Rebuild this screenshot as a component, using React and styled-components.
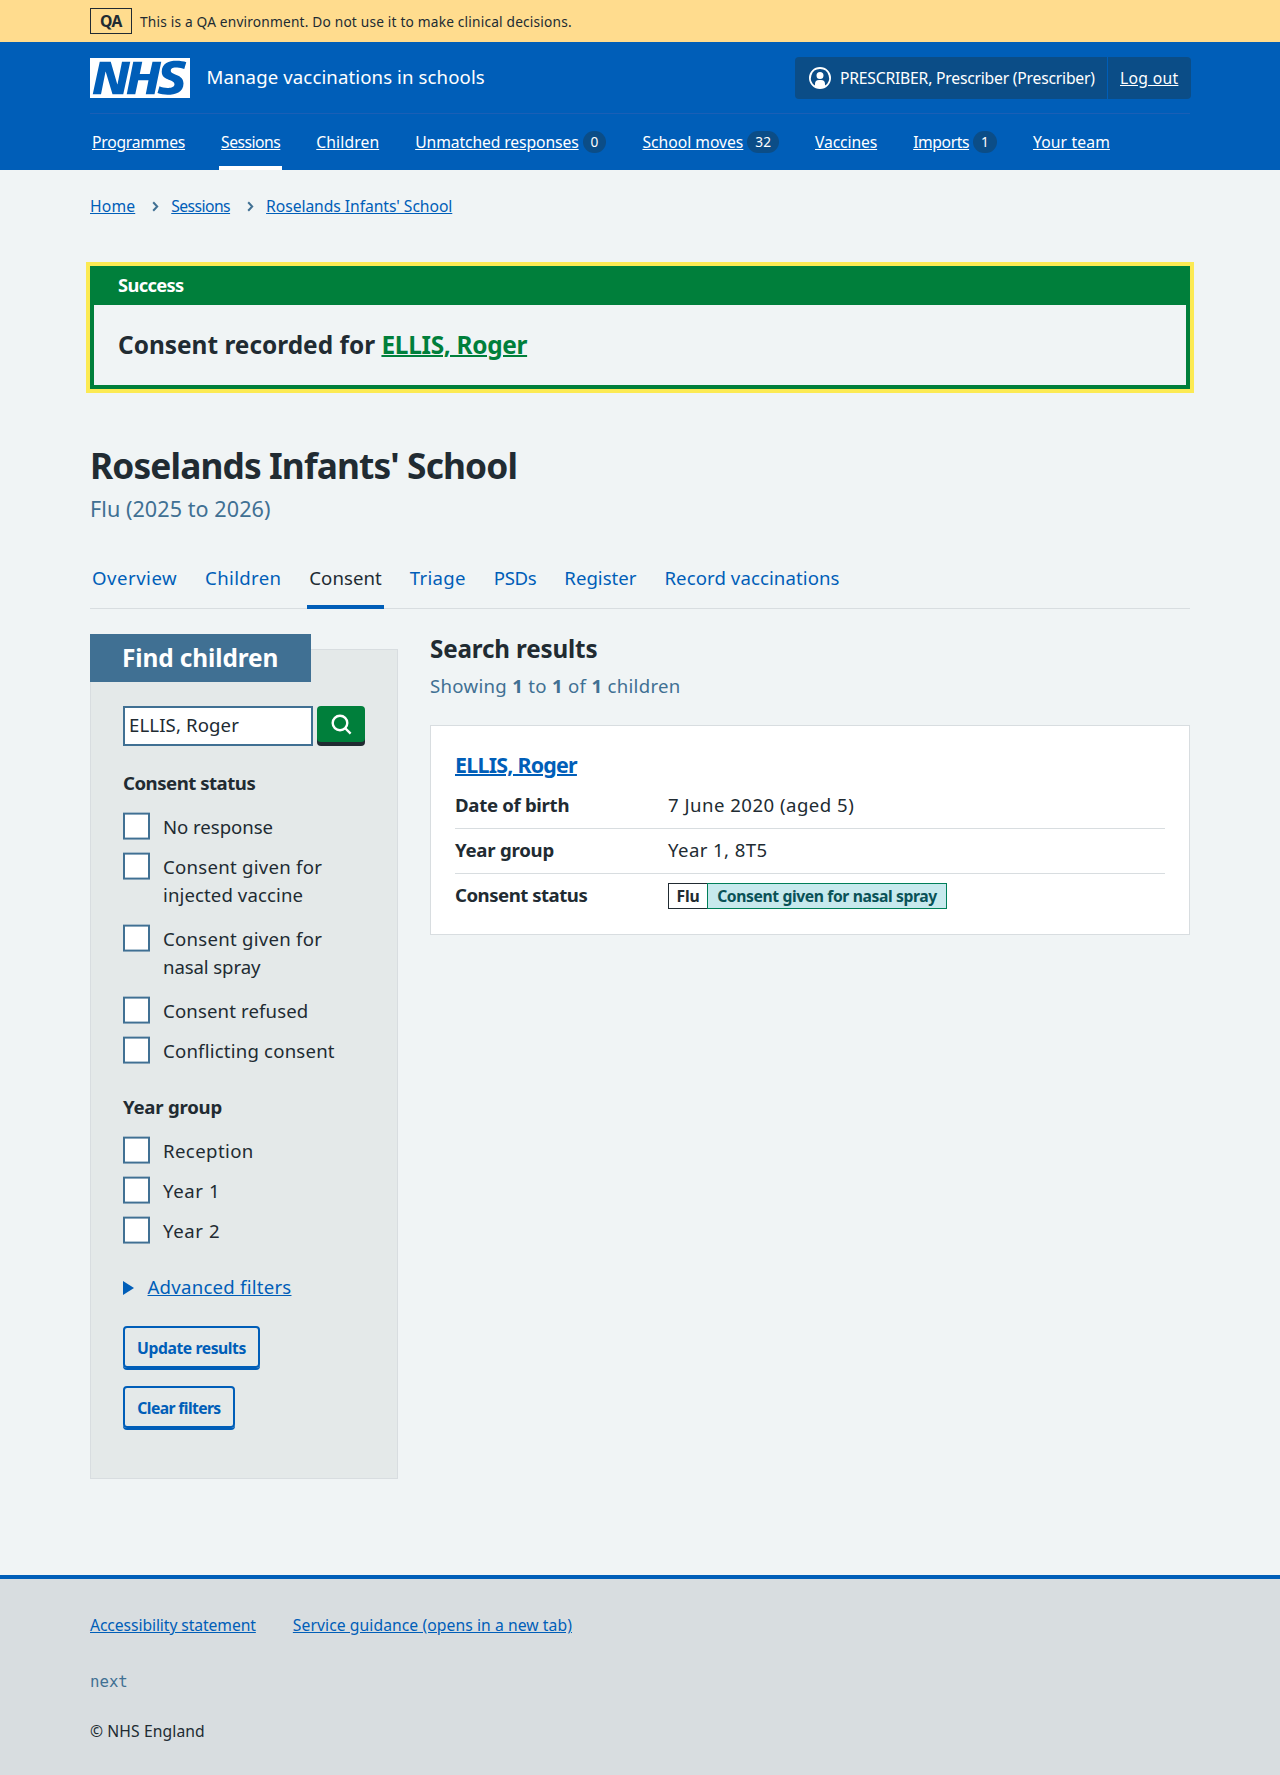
import React from "react";
import styled, { createGlobalStyle, css } from "styled-components";

const c = {
  blue: "#005eb8",
  darkBlue: "#0b4d87",
  green: "#007f3b",
  text: "#212b32",
  muted: "#407093",
  border: "#d8dde0",
  page: "#f0f4f5",
};

const Global = createGlobalStyle`
  *, *::before, *::after { box-sizing: border-box; }
  body {
    margin: 0;
    background: ${c.page};
    color: ${c.text};
    font-family: "Noto Sans", "Open Sans", sans-serif;
    font-size: 18.6px;
    line-height: 28px;
  }
  h1, h2, h3, p, ul, ol, dl, dd, fieldset { margin: 0; padding: 0; border: 0; }
  ul, ol { list-style: none; }
`;

const tracked = css`
  letter-spacing: ${(p) => p.$ls || 0}px;
`;

const Container = styled.div`
  width: 1100px;
  margin: 0 auto;
`;

/* Environment banner */
const Banner = styled.div`
  background: #ffdc8e;
`;
const BannerInner = styled(Container)`
  display: flex;
  align-items: center;
  height: 42px;
  gap: 8px;
`;
const EnvTag = styled.strong`
  display: flex;
  align-items: center;
  justify-content: center;
  width: 42px;
  height: 26px;
  border: 1px solid ${c.text};
  font-size: 15.7px;
  font-weight: 700;
  line-height: 24px;
  letter-spacing: -0.4px;
`;
const EnvText = styled.span`
  font-size: 13.72px;
  line-height: 24px;
  padding-top: 1px;
  letter-spacing: 0.18px;
`;

/* Header */
const Header = styled.header`
  background: ${c.blue};
  color: #fff;
`;
const HeaderTop = styled.div`
  display: flex;
  align-items: center;
  justify-content: space-between;
  height: 72px;
  padding: 15px 0 14px;
  border-bottom: 1px solid #1a5fb6;
`;
const Brand = styled.div`
  display: flex;
  align-items: center;
  gap: 16px;
`;
const Logo = styled.svg`
  display: block;
  width: 100px;
  height: 40px;
`;
const ServiceName = styled.span`
  padding: 0 0 2px 0.5px;
  letter-spacing: 0.11px;
`;
const Account = styled.div`
  display: flex;
  height: 42px;
  width: 396px;
  margin-right: -1px;
  border-radius: 4px;
  background: ${c.darkBlue};
  font-size: 15.7px;
  line-height: 24px;
`;
const AccountUser = styled.div`
  display: flex;
  align-items: center;
  width: 313px;
  padding-left: 13px;
  border-right: 1px solid ${c.blue};
  white-space: nowrap;
  letter-spacing: -0.21px;
`;
const UserIcon = styled.svg`
  width: 24px;
  height: 24px;
  margin-right: 8px;
  flex: none;
  fill: #fff;
`;
const LogOut = styled.a`
  display: flex;
  align-items: center;
  padding-left: 12px;
  text-decoration: underline;
  letter-spacing: 0.3px;
`;
const Nav = styled.ul`
  display: flex;
  gap: 32px;
  height: 56px;
`;
const NavItem = styled.li`
  display: flex;
  align-items: center;
  gap: 4px;
  padding: 0 2px;
  font-size: 15.7px;
  line-height: 24px;
  white-space: nowrap;
  box-shadow: ${(p) => (p.$active ? "inset 0 -4px #fff" : "none")};
`;
const NavLink = styled.a`
  text-decoration: underline;
  ${tracked}
`;
const Count = styled.span`
  height: 22px;
  padding: 0 8px;
  border-radius: 12px;
  background: ${c.darkBlue};
  font-size: 13.7px;
  line-height: 22px;
`;

/* Breadcrumb */
const Crumbs = styled.ol`
  display: flex;
  padding-top: 24px;
  font-size: 15.7px;
  line-height: 24px;
`;
const Crumb = styled.li`
  display: flex;
  align-items: center;
`;
const Chevron = styled.svg`
  width: 7px;
  height: 11px;
  margin: 1px 12px 0 17px;
  fill: none;
  stroke: ${c.muted};
  stroke-width: 2;
`;
const Link = styled.a`
  color: ${c.blue};
  text-decoration: underline;
  ${tracked}
`;

/* Notification */
const Notification = styled.section`
  margin-top: 48px;
  border: 4px solid ${c.green};
  box-shadow: 0 0 0 4px #fcea53;
`;
const NotificationTitle = styled.h2`
  padding: 1px 24px 6px;
  background: ${c.green};
  color: #fff;
  font-size: 18.3px;
  font-weight: 700;
  line-height: 28px;
  letter-spacing: -0.65px;
`;
const NotificationText = styled.h3`
  padding: 24px;
  font-size: 24.4px;
  font-weight: 700;
  line-height: 32px;
  letter-spacing: 0.01px;
`;
const GreenLink = styled.a`
  color: ${c.green};
  text-decoration: underline;
  text-decoration-thickness: 2px;
  letter-spacing: -0.3px;
`;

/* Page heading and tabs */
const Title = styled.h1`
  margin-top: 52px;
  font-size: 35.3px;
  font-weight: 700;
  line-height: 48px;
  letter-spacing: -0.88px;
`;
const Caption = styled.p`
  margin-top: 4px;
  color: ${c.muted};
  font-size: 21.6px;
  line-height: 32px;
  letter-spacing: 0.05px;
`;
const Tabs = styled.ul`
  display: flex;
  gap: 24px;
  height: 60px;
  margin-top: 24px;
  box-shadow: inset 0 -1px ${c.border};
`;
const Tab = styled.li`
  display: flex;
  align-items: center;
  padding: 1px 2px 0;
  border-bottom: 4px solid ${(p) => (p.$active ? c.blue : "transparent")};
  color: ${(p) => (p.$active ? c.text : c.blue)};
  white-space: nowrap;
  ${tracked}
`;

/* Columns */
const Columns = styled.main`
  display: grid;
  grid-template-columns: 308px 760px;
  column-gap: 32px;
  align-items: start;
`;
const Panel = styled.form`
  margin-top: 40px;
  padding: 0 32px 50px;
  border: 1px solid ${c.border};
  background: #e4e9e9;
`;
const PanelTitle = styled.h2`
  width: 221px;
  margin: -16px 0 24px -33px;
  padding: 0 32px;
  background: ${c.muted};
  color: #fff;
  font-size: 24.4px;
  font-weight: 700;
  line-height: 48px;
  white-space: nowrap;
  letter-spacing: -0.1px;
`;
const SearchRow = styled.div`
  display: flex;
  gap: 4px;
`;
const SearchInput = styled.input`
  width: 190px;
  height: 40px;
  padding: 0 4px 3px;
  border: 2px solid ${c.muted};
  border-radius: 0;
  background: #fff;
  color: ${c.text};
  font: inherit;
  letter-spacing: 0.12px;
`;
const SearchButton = styled.button`
  display: flex;
  align-items: center;
  justify-content: center;
  width: 48px;
  height: 36px;
  padding: 0 0 0 1px;
  border: 0;
  border-radius: 4px;
  background: ${c.green};
  box-shadow: 0 4px 0 ${c.text};
`;
const SearchIcon = styled.svg`
  width: 21px;
  height: 21px;
  fill: none;
  stroke: #fff;
  stroke-width: 2.4;
`;
const Group = styled.fieldset`
  margin-top: ${(p) => p.$top}px;
`;
const Legend = styled.h3`
  margin-bottom: 16px;
  font-size: 18.6px;
  font-weight: 700;
  line-height: 28px;
  ${tracked}
`;
const Option = styled.label`
  display: flex;
  gap: 13px;
  margin-bottom: ${(p) => (p.$wraps ? 16 : 12)}px;
  &:last-child { margin-bottom: 0; }
`;
const OptionLine = styled.span`
  display: block;
  ${tracked}
`;
const Box = styled.input.attrs({ type: "checkbox" })`
  appearance: none;
  flex: none;
  width: 27px;
  height: 27px;
  margin: 0;
  border: 2px solid ${c.muted};
  background: #fff;
  transform: translateY(-0.4px);
`;
const Details = styled.div`
  display: flex;
  align-items: center;
  gap: 13.5px;
  margin: 28px 0 25px;
`;
const Triangle = styled.span`
  margin-top: 2px;
  border-style: solid;
  border-color: transparent transparent transparent ${c.blue};
  border-width: 7px 0 7px 11px;
`;
const Button = styled.button`
  display: block;
  width: ${(p) => p.$width}px;
  height: 42px;
  padding: 1px 0 0;
  border: 2px solid ${c.blue};
  border-radius: 4px;
  background: transparent;
  box-shadow: 0 2px 0 ${c.blue};
  color: ${c.blue};
  font: 700 15.7px/24px "Noto Sans", sans-serif;
  white-space: nowrap;
  ${tracked}
  & + & { margin-top: 18px; }
`;

/* Results */
const Results = styled.section`
  padding-top: 24px;
`;
const ResultsTitle = styled.h2`
  font-size: 24.2px;
  font-weight: 700;
  line-height: 32px;
  letter-spacing: -0.15px;
`;
const ResultsCount = styled.p`
  margin-top: 7px;
  color: ${c.muted};
  letter-spacing: 0.3px;
  b { font-weight: 700; }
`;
const Card = styled.article`
  margin-top: 25px;
  padding: 23px 24px 25px;
  border: 1px solid ${c.border};
  background: #fff;
`;
const CardTitle = styled.h3`
  margin-bottom: 3px;
  font-size: 21.4px;
  font-weight: 700;
  line-height: 32px;
  a { text-decoration-thickness: 2px; }
`;
const SummaryRow = styled.div`
  display: grid;
  grid-template-columns: 213px 1fr;
  padding: 7px 0 9px;
  border-bottom: 1px solid ${c.border};
  &:last-child { padding-bottom: 0; border-bottom: 0; }
`;
const Key = styled.dt`
  font-weight: 700;
  ${tracked}
`;
const Value = styled.dd`
  display: flex;
  height: 28px;
  ${tracked}
`;
const Tag = styled.strong`
  display: flex;
  align-items: center;
  justify-content: center;
  width: ${(p) => p.$width}px;
  height: 26px;
  margin: 2px -1px 0 0;
  border: 1px solid ${(p) => (p.$given ? "#007f59" : c.text)};
  background: ${(p) => (p.$given ? "#c7e9ed" : "#fff")};
  color: ${(p) => (p.$given ? "#0a5257" : c.text)};
  font-size: 15.7px;
  font-weight: 700;
  line-height: 24px;
  white-space: nowrap;
  ${tracked}
`;

/* Footer */
const Footer = styled.footer`
  margin-top: 96px;
  padding: 34px 0 32px;
  border-top: 4px solid ${c.blue};
  background: ${c.border};
  font-size: 15.7px;
  line-height: 24px;
`;
const FooterLinks = styled.div`
  display: flex;
  gap: 37px;
`;
const Version = styled.p`
  margin-top: 33px;
  color: ${c.muted};
  font-family: "DejaVu Sans Mono", monospace;
  font-size: 15.7px;
`;
const Copyright = styled.p`
  margin-top: 25px;
  letter-spacing: 0.09px;
`;

const navItems = [
  { label: "Programmes", ls: -0.24 },
  { label: "Sessions", ls: -0.5, active: true },
  { label: "Children", ls: 0.1 },
  { label: "Unmatched responses", ls: -0.1, count: 0 },
  { label: "School moves", ls: -0.02, count: 32 },
  { label: "Vaccines", ls: -0.12 },
  { label: "Imports", ls: -0.4, count: 1 },
  { label: "Your team", ls: 0.13 },
];

const tabs = [
  { label: "Overview", ls: 0.5 },
  { label: "Children", ls: 0.33 },
  { label: "Consent", ls: 0.05, active: true },
  { label: "Triage", ls: 0.3 },
  { label: "PSDs", ls: -0.35 },
  { label: "Register", ls: 0 },
  { label: "Record vaccinations", ls: 0.09 },
];

const consentOptions = [
  [["No response", -0.04]],
  [["Consent given for", 0.26], ["injected vaccine", 0.1]],
  [["Consent given for", 0.26], ["nasal spray", -0.1]],
  [["Consent refused", 0.13]],
  [["Conflicting consent", 0.2]],
];

const yearOptions = [[["Reception", 0.4]], [["Year 1", 0.6]], [["Year 2", 0.6]]];

function Filter({ title, options, top, ls }) {
  return (
    <Group $top={top}>
      <Legend $ls={ls}>{title}</Legend>
      <div>
        {options.map((lines, i) => (
          <Option key={i} $wraps={lines.length > 1}>
            <Box />
            <span>
              {lines.map(([text, spacing]) => (
                <OptionLine key={text} $ls={spacing}>{text}</OptionLine>
              ))}
            </span>
          </Option>
        ))}
      </div>
    </Group>
  );
}

const Separator = () => (
  <Chevron viewBox="0 0 7 11">
    <path d="M1.2 1.2 5.2 5.5 1.2 9.8" />
  </Chevron>
);

export default function App() {
  return (
    <>
      <Global />
      <Banner>
        <BannerInner>
          <EnvTag>QA</EnvTag>
          <EnvText>This is a QA environment. Do not use it to make clinical decisions.</EnvText>
        </BannerInner>
      </Banner>

      <Header>
        <Container>
          <HeaderTop>
            <Brand>
              <Logo viewBox="0 0 200 80" role="img" aria-label="NHS">
                <path
                  fill="#fff"
                  d="M200 0v80H0V0h200Zm-27.5 5.5c-14.5 0-29 5-29 22 0 10.2 7.7 13.5 14.7 16.3l.7.3c5.4 2 10.1 3.9 10.1 8.4 0 6.5-8.5 7.5-14 7.5s-12.5-1.5-16-3.5L135 70c5.5 2 13.5 3.5 20 3.5 15.5 0 32-4.5 32-22.5 0-19.5-25.5-16.5-25.5-25.5 0-5.5 5.5-6.5 12.5-6.5a35 35 0 0 1 14.5 3l4-13.5c-4.5-2-12-3-20-3Zm-131 2h-22l-14 65H22l9-45h.5l13.5 45h21.5l14-65H64l-9 45h-.5l-13-45Zm63 0h-18l-13 65h17l6-28H117l-5.5 28H129l13.5-65H125L119.5 32h-20l5-24.5Z"
                />
              </Logo>
              <ServiceName>Manage vaccinations in schools</ServiceName>
            </Brand>
            <Account>
              <AccountUser>
                <UserIcon viewBox="0 0 24 24">
                  <path d="M12 1a11 11 0 1 1 0 22 11 11 0 0 1 0-22Zm0 2a9 9 0 0 0-5 16.5V18a4 4 0 0 1 4-4h2a4 4 0 0 1 4 4v1.5A9 9 0 0 0 12 3Zm0 3a3.5 3.5 0 1 1 0 7 3.5 3.5 0 0 1 0-7Z" />
                </UserIcon>
                PRESCRIBER, Prescriber (Prescriber)
              </AccountUser>
              <LogOut>Log out</LogOut>
            </Account>
          </HeaderTop>
          <Nav>
            {navItems.map((n) => (
              <NavItem key={n.label} $active={n.active}>
                <NavLink $ls={n.ls}>{n.label}</NavLink>
                {n.count !== undefined && <Count>{n.count}</Count>}
              </NavItem>
            ))}
          </Nav>
        </Container>
      </Header>

      <Container>
        <Crumbs>
          <Crumb><Link $ls={0.15}>Home</Link></Crumb>
          <Crumb><Separator /><Link $ls={-0.55}>Sessions</Link></Crumb>
          <Crumb><Separator /><Link $ls={-0.07}>Roselands Infants' School</Link></Crumb>
        </Crumbs>

        <Notification>
          <NotificationTitle>Success</NotificationTitle>
          <NotificationText>
            Consent recorded for <GreenLink>ELLIS, Roger</GreenLink>
          </NotificationText>
        </Notification>

        <Title>Roselands Infants' School</Title>
        <Caption>Flu (2025 to 2026)</Caption>

        <Tabs>
          {tabs.map((t) => (
            <Tab key={t.label} $active={t.active} $ls={t.ls}>{t.label}</Tab>
          ))}
        </Tabs>

        <Columns>
          <Panel>
            <PanelTitle>Find children</PanelTitle>
            <SearchRow>
              <SearchInput defaultValue="ELLIS, Roger" />
              <SearchButton type="button" aria-label="Search">
                <SearchIcon viewBox="0 0 21 21">
                  <circle cx="9" cy="9" r="7.3" />
                  <path d="m14 14 5.6 5.6" />
                </SearchIcon>
              </SearchButton>
            </SearchRow>
            <Filter title="Consent status" options={consentOptions} top={23} ls={-0.49} />
            <Filter title="Year group" options={yearOptions} top={28} ls={-0.23} />
            <Details>
              <Triangle />
              <Link $ls={0.24}>Advanced filters</Link>
            </Details>
            <Button type="button" $width={137} $ls={-0.43}>Update results</Button>
            <Button type="button" $width={112} $ls={-0.6}>Clear filters</Button>
          </Panel>

          <Results>
            <ResultsTitle>Search results</ResultsTitle>
            <ResultsCount>
              Showing <b>1</b> to <b>1</b> of <b>1</b> children
            </ResultsCount>
            <Card>
              <CardTitle><Link $ls={-0.75}>ELLIS, Roger</Link></CardTitle>
              <dl>
                <SummaryRow>
                  <Key $ls={-0.31}>Date of birth</Key>
                  <Value $ls={0.48}>7 June 2020 (aged 5)</Value>
                </SummaryRow>
                <SummaryRow>
                  <Key $ls={-0.23}>Year group</Key>
                  <Value $ls={0.4}>Year 1, 8T5</Value>
                </SummaryRow>
                <SummaryRow>
                  <Key $ls={-0.49}>Consent status</Key>
                  <Value>
                    <Tag $width={40} $ls={-0.1}>Flu</Tag>
                    <Tag $width={240} $ls={-0.39} $given>Consent given for nasal spray</Tag>
                  </Value>
                </SummaryRow>
              </dl>
            </Card>
          </Results>
        </Columns>
      </Container>

      <Footer>
        <Container>
          <FooterLinks>
            <Link $ls={-0.09}>Accessibility statement</Link>
            <Link $ls={0.07}>Service guidance (opens in a new tab)</Link>
          </FooterLinks>
          <Version>next</Version>
          <Copyright>© NHS England</Copyright>
        </Container>
      </Footer>
    </>
  );
}
